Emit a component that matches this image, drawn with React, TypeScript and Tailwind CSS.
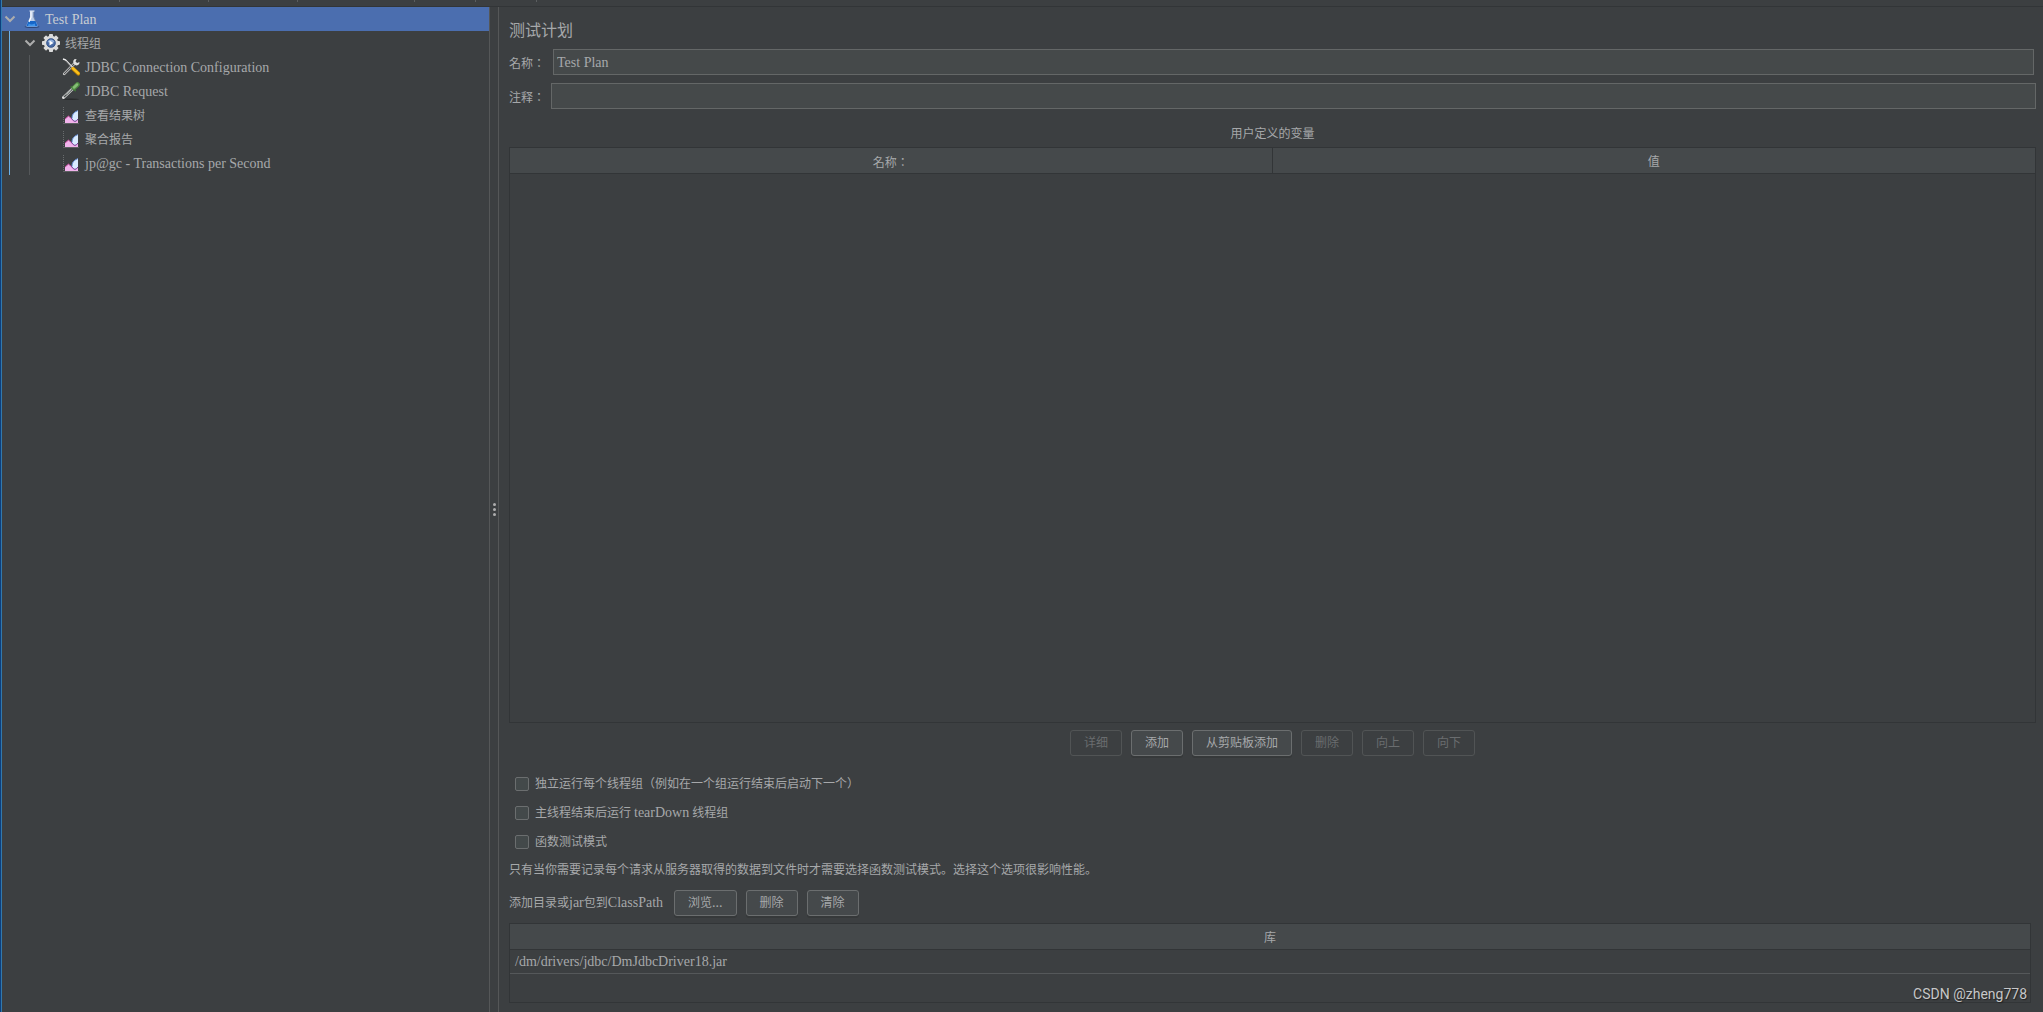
import React from 'react';
import clsx from 'clsx';

type IconName = 'flask' | 'gear' | 'tools' | 'dropper' | 'chart';

interface TreeNode {
  label: string;
  icon: IconName;
  latin?: boolean;
  selected?: boolean;
  children?: TreeNode[];
}

const tree: TreeNode = {
  label: 'Test Plan',
  icon: 'flask',
  latin: true,
  selected: true,
  children: [
    {
      label: '线程组',
      icon: 'gear',
      children: [
        { label: 'JDBC Connection Configuration', icon: 'tools', latin: true },
        { label: 'JDBC Request', icon: 'dropper', latin: true },
        { label: '查看结果树', icon: 'chart' },
        { label: '聚合报告', icon: 'chart' },
        { label: 'jp@gc - Transactions per Second', icon: 'chart', latin: true },
      ],
    },
  ],
};

const FlaskIcon = () => (
  <svg viewBox="0 0 18 18" className="h-[18px] w-[18px]">
    <ellipse cx="10" cy="16.8" rx="7.5" ry="1.2" fill="#23365e" opacity="0.7" />
    <path d="M8 1h4v6l3.600 8.400q.4 1.600-1.400 1.600H5.800q-1.800 0-1.400-1.600L8 7z" fill="#b9cbe8" />
    <path d="M6.300 11h7.400l1.700 4.400q.2 1.200-1 1.200H5.600q-1.200 0-1-1.200z" fill="#1766c8" />
    <path d="M6.800 13.500q2.500 2 6 0l.5 2.500H6z" fill="#3e95ec" />
    <path d="M9 1.500v5.800L7 12" fill="none" stroke="#ffffff" strokeWidth="1.200" />
    <path d="M11.700 1.500v5.500l2 4.500" fill="none" stroke="#54678c" strokeWidth="0.700" />
    <path d="M7.500 1h5" stroke="#e7edf6" />
  </svg>
);

const GearIcon = () => (
  <svg viewBox="0 0 18 18" className="h-[18px] w-[18px]">
    <g fill="#dcdcdc">
      <rect x="7" y="0" width="4" height="18" rx="0.800" />
      <rect x="7" y="0" width="4" height="18" rx="0.800" transform="rotate(45 9 9)" />
      <rect x="7" y="0" width="4" height="18" rx="0.800" transform="rotate(90 9 9)" />
      <rect x="7" y="0" width="4" height="18" rx="0.800" transform="rotate(135 9 9)" />
      <circle cx="9" cy="9" r="7.200" />
    </g>
    <circle cx="9" cy="9" r="4.600" fill="#4a6ca6" />
    <circle cx="9" cy="9" r="4.300" fill="none" stroke="#2d4a7c" strokeWidth="0.700" />
    <path d="M5.500 8a3.700 3.700 0 0 1 7 0q-3.500 1.500-7 0z" fill="#90afdb" />
    <path d="M7.500 6.600l4 2.400-4 2.400z" fill="#ffffff" />
  </svg>
);

const ToolsIcon = () => (
  <svg viewBox="0 0 18 18" className="h-[18px] w-[18px]">
    <path d="M2.200 15.800L12.500 5.500" stroke="#d4d4d4" strokeWidth="2.600" strokeLinecap="round" />
    <path d="M2.400 15.600L12 6" stroke="#4f5152" strokeWidth="1.100" strokeLinecap="round" />
    <path d="M12.300 1.300a3.600 3.600 0 0 0-.8 4l1.700 1.800a3.600 3.600 0 0 0 4-1l.3-2.200-2.400 1-1.600-1.500 1.100-2.300z" fill="#e0e0e0" />
    <path d="M1 1l2.400.8L11 10" fill="none" stroke="#f0f0f0" strokeWidth="1.500" />
    <path d="M3.800 2.900L10 9.700" stroke="#313131" strokeWidth="0.500" />
    <path d="M11 10.700l5.300 5" stroke="#b67c00" strokeWidth="3.800" strokeLinecap="round" />
    <path d="M11 10.400l5.300 5" stroke="#fbc01b" strokeWidth="2.600" strokeLinecap="round" />
  </svg>
);

const DropperIcon = () => (
  <svg viewBox="0 0 18 18" className="h-[18px] w-[18px]">
    <ellipse cx="9" cy="17.200" rx="8" ry="0.700" fill="#292b2c" />
    <path d="M1.500 15.500L11 6.500" stroke="#d8d8d8" strokeWidth="3" strokeLinecap="round" />
    <path d="M2 15L10.300 7.200" stroke="#4a504f" strokeWidth="1.400" />
    <path d="M4.500 12.500L9.500 7.800" stroke="#c5ccc9" strokeWidth="0.800" />
    <path d="M9.300 4.800l4 3.800" stroke="#3f6f38" strokeWidth="1.800" strokeLinecap="round" />
    <path d="M12 5.800l3.500-3.300" stroke="#4f8d43" strokeWidth="4.600" strokeLinecap="round" />
    <path d="M11.900 5.500l3.200-3" stroke="#86bd76" strokeWidth="2.400" strokeLinecap="round" />
  </svg>
);

const ChartIcon = () => (
  <svg viewBox="0 0 18 18" className="h-[18px] w-[18px]">
    <path d="M1.500 1v16" stroke="#696c6e" strokeWidth="1" strokeDasharray="1 1" />
    <path d="M1 17.500h16" stroke="#5e6163" strokeWidth="1" />
    <path d="M3 17v-4.500L6.500 10l3 2.500 6.500-1v5.500z" fill="#f2b3ec" />
    <path d="M3 13l3.500-3 3.500 3" fill="none" stroke="#b23f8d" strokeWidth="1" />
    <path d="M10 13q-1-6 6-8.500v8q-1.500 3-3.500 2.500z" fill="#d9ebff" />
    <path d="M10 12.500q-.5-5.500 6-8" fill="none" stroke="#6389cf" strokeWidth="1" />
    <path d="M9.500 12.500q3.500 5.500 6.500.5" fill="none" stroke="#6d3c91" strokeWidth="1" />
  </svg>
);

const icons: Record<IconName, React.FC> = {
  flask: FlaskIcon,
  gear: GearIcon,
  tools: ToolsIcon,
  dropper: DropperIcon,
  chart: ChartIcon,
};

const TreeItem: React.FC<{ node: TreeNode; level: number }> = ({ node, level }) => {
  const Icon = icons[node.icon];

  return (
    <li>
      <div className={clsx('flex h-6 items-center pl-0.5', node.selected && 'bg-[#4b6eaf] text-[#c8ccd2]')}>
        <span className="w-[18px]">
          {node.children && (
            <svg viewBox="0 0 12 12" className="h-3 w-3" fill="none" stroke="#adadad" strokeWidth="2">
              <path d="M1.500 3.500L6 8l4.500-4.500" />
            </svg>
          )}
        </span>
        <Icon />
        <span className={clsx('ml-[5px] pt-0.5 whitespace-nowrap', node.latin ? 'text-sm' : 'text-xs')}>
          {node.label}
        </span>
      </div>
      {node.children && (
        <ul className={clsx('ml-[7px] border-l pl-3', level === 0 ? 'border-[#6cb1e8]' : 'border-[#55585a]')}>
          {node.children.map((child) => (
            <TreeItem key={child.label} node={child} level={level + 1} />
          ))}
        </ul>
      )}
    </li>
  );
};

const PanelButton: React.FC<{ children: React.ReactNode; disabled?: boolean }> = ({ children, disabled }) => (
  <button
    type="button"
    disabled={disabled}
    className={clsx(
      'h-[26px] rounded-[3px] border px-[13px] leading-6',
      disabled ? 'border-[#515455] text-[#6a6d6f]' : 'border-[#6b6e6f] bg-[#45494b] shadow-[0_2px_0_#36393a]'
    )}
  >
    {children}
  </button>
);

const Option: React.FC<{ children: React.ReactNode }> = ({ children }) => (
  <label className="flex h-[29px] items-center gap-1.5 pl-1.5">
    <input
      type="checkbox"
      className="h-3.5 w-3.5 appearance-none rounded-[2px] border border-[#6b6e6f] bg-[#43494a] checked:bg-[#4b6eaf]"
    />
    <span>{children}</span>
  </label>
);

const headCell = 'h-[26px] border-b border-[#323537] bg-[#45494b] p-0 pt-0.5 font-normal';
const fieldLabel = "pt-0.5 font-['Noto_Sans_CJK_TC',sans-serif]";
const textField = 'h-[26px] min-w-0 flex-1 border border-[#646767] bg-[#45494a] px-[3px] pt-0.5 text-sm outline-none';

export default function App() {
  return (
    <div className="flex h-screen min-h-[600px] flex-col border-l border-[#0d3f7c] bg-[#3c3f41] font-['Liberation_Serif','Noto_Sans_CJK_SC',serif] text-xs text-[#a6a8aa]">
      <div className="flex min-h-0 flex-1 flex-col border-l border-[#3279ad]">
        {/* lower edge of the toolbar with its separators */}
        <div className="flex h-[7px] shrink-0 border-b border-[#323537]">
          <span className="h-0.5 w-[118px] border-r border-[#5b5e60]" />
          <span className="h-0.5 w-[89px] border-r border-[#5b5e60]" />
          <span className="h-0.5 w-[89px] border-r border-[#5b5e60]" />
          <span className="h-0.5 w-[117px] border-r border-[#5b5e60]" />
          <span className="h-0.5 w-[61px] border-r border-[#5b5e60]" />
          <span className="h-0.5 w-[61px] border-r border-[#5b5e60]" />
        </div>

        <div className="flex min-h-0 flex-1">
          <nav className="w-[487px] shrink-0">
            <ul>
              <TreeItem node={tree} level={0} />
            </ul>
          </nav>

          {/* split pane divider */}
          <div className="flex w-2.5 shrink-0 flex-col items-center justify-center gap-0.5 border-x border-[#555758]">
            <span className="h-[3px] w-[3px] rounded-full bg-[#adadad]" />
            <span className="h-[3px] w-[3px] rounded-full bg-[#adadad]" />
            <span className="h-[3px] w-[3px] rounded-full bg-[#adadad]" />
          </div>

          <main className="flex min-w-0 flex-1 flex-col pt-3 pr-[7px] pb-[9px] pl-2.5">
            <h1 className="text-base leading-6">测试计划</h1>

            <div className="mt-1.5 flex items-center gap-2 pr-0.5">
              <label htmlFor="plan-name" className={fieldLabel}>名称：</label>
              <input id="plan-name" type="text" defaultValue="Test Plan" className={textField} />
            </div>
            <div className="mt-2 flex items-center gap-1.5">
              <label htmlFor="plan-comment" className={fieldLabel}>注释：</label>
              <input id="plan-comment" type="text" className={textField} />
            </div>

            <h2 className="mt-[17px] text-center leading-4">用户定义的变量</h2>
            <div className="mt-[5px] min-h-0 flex-1 border border-[#323537]">
              <table className="w-full table-fixed border-separate border-spacing-0">
                <thead>
                  <tr>
                    <th className={clsx(headCell, "border-r font-['Noto_Sans_CJK_TC',sans-serif]")}>名称：</th>
                    <th className={headCell}>值</th>
                  </tr>
                </thead>
              </table>
            </div>

            <div className="mt-[7px] flex justify-center gap-[9px]">
              <PanelButton disabled>详细</PanelButton>
              <PanelButton>添加</PanelButton>
              <PanelButton>从剪贴板添加</PanelButton>
              <PanelButton disabled>删除</PanelButton>
              <PanelButton disabled>向上</PanelButton>
              <PanelButton disabled>向下</PanelButton>
            </div>

            <div className="mt-[13px]">
              <Option>独立运行每个线程组（例如在一个组运行结束后启动下一个）</Option>
              <Option>
                主线程结束后运行 <span className="text-sm">tearDown</span> 线程组
              </Option>
              <Option>函数测试模式</Option>
            </div>
            <p className="mt-0.5 leading-6">
              只有当你需要记录每个请求从服务器取得的数据到文件时才需要选择函数测试模式。选择这个选项很影响性能。
            </p>

            <div className="mt-2 flex items-center gap-[9px]">
              <span className="pr-0.5">
                添加目录或<span className="text-sm">jar</span>包到<span className="text-sm">ClassPath</span>
              </span>
              <PanelButton>
                浏览<span className="text-sm leading-none">...</span>
              </PanelButton>
              <PanelButton>删除</PanelButton>
              <PanelButton>清除</PanelButton>
            </div>

            <div className="mt-[7px] mr-[5px] h-20 shrink-0 border border-[#323537]">
              <table className="w-full border-separate border-spacing-0">
                <thead>
                  <tr>
                    <th className={headCell}>库</th>
                  </tr>
                </thead>
                <tbody>
                  <tr>
                    <td className="h-6 border-b border-[#55585a] p-0 pl-[5px] text-sm">
                      /dm/drivers/jdbc/DmJdbcDriver18.jar
                    </td>
                  </tr>
                </tbody>
              </table>
            </div>
          </main>
        </div>
      </div>

      <span className="absolute right-4 bottom-2 font-['Roboto',sans-serif] text-sm text-[#c6c7c8] [text-shadow:1px_1px_1px_#222]">
        CSDN @zheng778
      </span>
    </div>
  );
}
